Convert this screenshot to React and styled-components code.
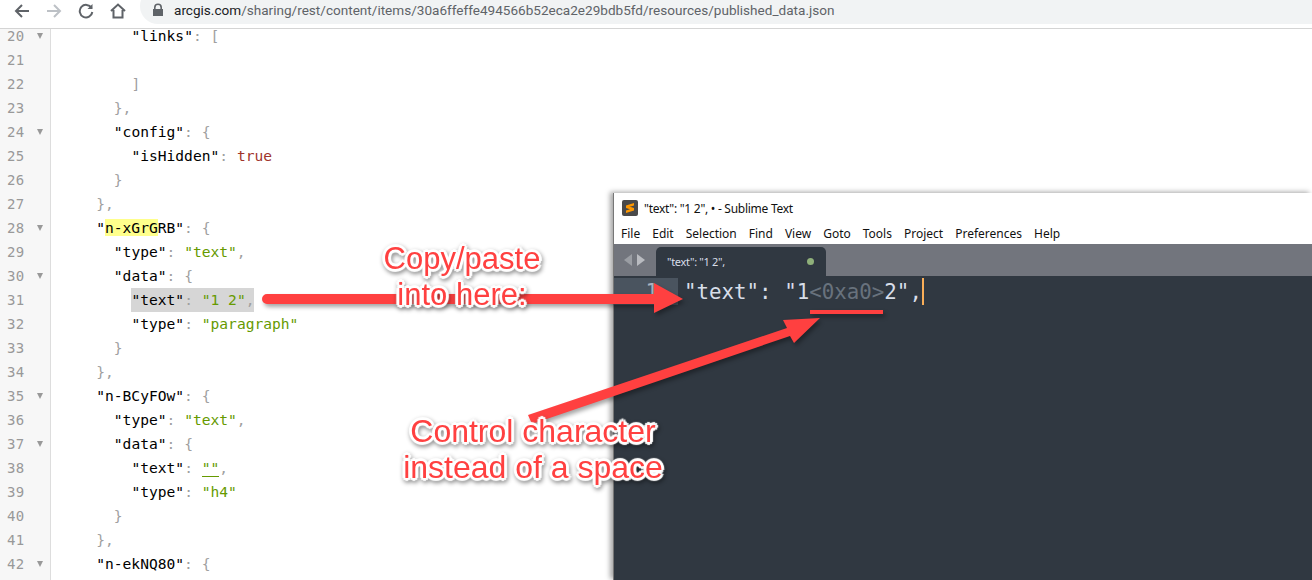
import styled, { createGlobalStyle } from "styled-components";

const GlobalStyle = createGlobalStyle`
  html, body { margin: 0; padding: 0; background: #fff; }
  body { width: 1312px; height: 580px; overflow: hidden; position: relative; }
`;

const Page = styled.div`
  position: relative;
  width: 1312px;
  height: 580px;
  overflow: hidden;
  display: flex;
  flex-direction: column;
`;

/* browser chrome */
const Toolbar = styled.div`
  height: 29px;
  flex: none;
  display: flex;
  align-items: flex-start;
  padding-top: 3px;
  background: #fff;
  border-bottom: 1px solid #d4d4d4;
  box-sizing: border-box;
  position: relative;
  z-index: 1;
  overflow: hidden;
`;
const NavIcon = styled.svg`
  width: 16px;
  height: 16px;
  flex: none;
  margin-left: ${(p) => p.$gap}px;
  fill: none;
  stroke: ${(p) => p.$color || "#5f6368"};
  stroke-width: 2;
`;
const UrlPill = styled.div`
  margin-left: 14px;
  flex: 1;
  height: 36px;
  margin-top: -15px;
  background: #f1f3f4;
  border-radius: 18px 0 0 18px;
  display: flex;
  align-items: center;
  padding: 8px 0 0 12px;
  box-sizing: border-box;
  font: 13.57px "Roboto", sans-serif;
  color: #5f6368;
`;
const Lock = styled.svg`
  width: 12px;
  height: 14px;
  margin-right: 10px;
  fill: #5f6368;
`;
const Host = styled.span`
  color: #202124;
`;

/* json viewer */
const Viewer = styled.div`
  flex: 1;
  margin-top: -5px;
  font: 14.6px "DejaVu Sans Mono", monospace;
  color: #000;
  background: linear-gradient(to right, #f7f7f7 50px, #ddd 50px, #ddd 51px, #fff 51px);
`;
const Row = styled.div`
  display: flex;
  height: 24px;
  line-height: 24px;
`;
const Gutter = styled.div`
  width: 51px;
  flex: none;
  display: flex;
  align-items: center;
  color: #999;
  padding-left: 7px;
  box-sizing: border-box;
`;
const LineNo = styled.span`
  width: 30px;
  font-size: 14px;
  letter-spacing: 0.2px;
`;
const Fold = styled.span`
  width: 0;
  height: 0;
  border-left: 3.5px solid transparent;
  border-right: 3.5px solid transparent;
  border-top: 6px solid #999;
`;
const Code = styled.div`
  padding-left: ${(p) => 10 + p.$indent * 8.8}px;
  white-space: pre;
`;
const Punct = styled.span`
  color: #a0a0a0;
`;
const Str = styled.span`
  color: #669a00;
`;
const Bool = styled.span`
  color: #a0342c;
`;
const Match = styled.span`
  background: #ffff8c;
`;
const Selected = styled.span`
  background: #d6d6d6;
  display: inline-block;
`;
const Empty = styled.span`
  color: #669a00;
  border-bottom: 1px solid #669a00;
`;

/* sublime window */
const Sublime = styled.div`
  position: absolute;
  left: 613px;
  top: 193px;
  right: 0;
  bottom: 0;
  background: #fff;
  box-shadow: -3px -1px 5px rgba(0, 0, 0, 0.35);
  border-left: 1px solid #777;
  display: flex;
  flex-direction: column;
  font: 12px "Noto Sans", sans-serif;
  color: #111;
`;
const TitleBar = styled.div`
  height: 30px;
  display: flex;
  align-items: center;
  gap: 6px;
  padding-left: 8px;
  letter-spacing: -0.27px;
`;
const Menu = styled.div`
  height: 21px;
  display: flex;
  align-items: center;
  gap: 12px;
  padding-left: 7px;
`;
const TabBar = styled.div`
  height: 32px;
  background: #72757d;
  display: flex;
  align-items: flex-end;
  padding-left: 10px;
`;
const TabArrow = styled.span`
  width: 0;
  height: 0;
  align-self: center;
  border-top: 6px solid transparent;
  border-bottom: 6px solid transparent;
  ${(p) => (p.$left ? "border-right: 8px solid #9a9da3;" : "border-left: 8px solid #b9bbc0;")}
  margin-right: ${(p) => (p.$left ? 5 : 0)}px;
`;
const Tab = styled.div`
  margin-left: 11px;
  width: 170px;
  height: 29px;
  background: #303841;
  border-radius: 5px 5px 0 0;
  color: #d8dee9;
  font-size: 11px;
  letter-spacing: -0.3px;
  display: flex;
  align-items: center;
  justify-content: space-between;
  padding: 0 12px 0 11px;
  box-sizing: border-box;
`;
const Dot = styled.span`
  width: 7px;
  height: 7px;
  border-radius: 50%;
  background: #8fb07a;
`;
const EditorPane = styled.div`
  flex: 1;
  background: #303841;
  padding-top: 2px;
`;
const EditorLine = styled.div`
  display: flex;
  height: 27px;
  font: 20.8px/29px "DejaVu Sans Mono", monospace;
  color: #d8dee9;
`;
const EditorGutter = styled.div`
  width: 64px;
  background: #4a545f;
  text-align: right;
  padding-right: 20px;
  box-sizing: border-box;
  color: #aab2bf;
`;
const EditorText = styled.div`
  padding-left: 6px;
  white-space: pre;
`;
const Ctrl = styled.span`
  color: #68727d;
`;
const Caret = styled.span`
  display: inline-block;
  width: 2px;
  height: 27px;
  background: #f9ae58;
  vertical-align: top;
`;

/* annotations */
const Overlay = styled.svg`
  position: absolute;
  left: 0;
  top: 0;
  width: 1312px;
  height: 580px;
  filter: drop-shadow(2px 3px 2px rgba(0, 0, 0, 0.35));
`;
const Callout = styled.div`
  position: absolute;
  left: ${(p) => p.$x}px;
  top: ${(p) => p.$y}px;
  transform: translateX(-50%);
  text-align: center;
  white-space: nowrap;
  font: ${(p) => p.$size}px/36px "Liberation Sans", Arial, sans-serif;
  color: #ff4040;
  text-shadow: 3px 0 1px #fff, -3px 0 1px #fff, 0 3px 1px #fff, 0 -3px 1px #fff, 2px 2px 1px #fff,
    -2px 2px 1px #fff, 2px -2px 1px #fff, -2px -2px 1px #fff, 0 0 2px #fff;
  filter: drop-shadow(1px 2px 2px rgba(0, 0, 0, 0.45));
`;

const Q = ({ children }) => <>"{children}"</>;
const Key = ({ name, tail = ":" }) => (
  <>
    <Q>{name}</Q>
    <Punct>{tail}</Punct>
  </>
);
const TypeText = () => (
  <>
    <Key name="type" /> <Str>"text"</Str>
    <Punct>,</Punct>
  </>
);
const Open = ({ name }) => (
  <>
    <Key name={name} /> <Punct>{"{"}</Punct>
  </>
);

const lines = [
  { n: 20, i: 8, fold: true, c: <><Key name="links" /> <Punct>[</Punct></> },
  { n: 21, i: 0 },
  { n: 22, i: 8, c: <Punct>]</Punct> },
  { n: 23, i: 6, c: <Punct>{"},"}</Punct> },
  { n: 24, i: 6, fold: true, c: <Open name="config" /> },
  { n: 25, i: 8, c: <><Key name="isHidden" /> <Bool>true</Bool></> },
  { n: 26, i: 6, c: <Punct>{"}"}</Punct> },
  { n: 27, i: 4, c: <Punct>{"},"}</Punct> },
  { n: 28, i: 4, fold: true, c: <>"<Match>n-xGrG</Match>RB"<Punct>:</Punct> <Punct>{"{"}</Punct></> },
  { n: 29, i: 6, c: <TypeText /> },
  { n: 30, i: 6, fold: true, c: <Open name="data" /> },
  { n: 31, i: 8, c: <Selected><Key name="text" /> <Str>"1 2"</Str><Punct>,</Punct></Selected> },
  { n: 32, i: 8, c: <><Key name="type" /> <Str>"paragraph"</Str></> },
  { n: 33, i: 6, c: <Punct>{"}"}</Punct> },
  { n: 34, i: 4, c: <Punct>{"},"}</Punct> },
  { n: 35, i: 4, fold: true, c: <Open name="n-BCyFOw" /> },
  { n: 36, i: 6, c: <TypeText /> },
  { n: 37, i: 6, fold: true, c: <Open name="data" /> },
  { n: 38, i: 8, c: <><Key name="text" /> <Empty>""</Empty><Punct>,</Punct></> },
  { n: 39, i: 8, c: <><Key name="type" /> <Str>"h4"</Str></> },
  { n: 40, i: 6, c: <Punct>{"}"}</Punct> },
  { n: 41, i: 4, c: <Punct>{"},"}</Punct> },
  { n: 42, i: 4, fold: true, c: <Open name="n-ekNQ80" /> },
];

const menuItems = ["File", "Edit", "Selection", "Find", "View", "Goto", "Tools", "Project", "Preferences", "Help"];

export default function App() {
  return (
    <Page>
      <GlobalStyle />
      <Toolbar>
        <NavIcon $gap={14} viewBox="0 0 16 16">
          <path d="M15 8H2M8 2L2 8l6 6" />
        </NavIcon>
        <NavIcon $gap={16} $color="#bdc1c6" viewBox="0 0 16 16">
          <path d="M1 8h13M8 2l6 6-6 6" />
        </NavIcon>
        <NavIcon $gap={16} viewBox="0 0 16 16">
          <path d="M13.5 5A6.3 6.3 0 1 0 14.3 9" />
          <path d="M14.5 1v5h-5" fill="#5f6368" stroke="none" />
        </NavIcon>
        <NavIcon $gap={16} viewBox="0 0 16 16">
          <path d="M1 8l7-6.5L15 8M3.5 7v7.5h9V7" />
        </NavIcon>
        <UrlPill>
          <Lock viewBox="0 0 12 14">
            <path d="M2 6V4.5a4 4 0 0 1 8 0V6h1v7H1V6zm1.6 0h4.8V4.5a2.4 2.4 0 0 0-4.8 0z" />
          </Lock>
          <Host>arcgis.com</Host>/sharing/rest/content/items/30a6ffeffe494566b52eca2e29bdb5fd/resources/published_data.json
        </UrlPill>
      </Toolbar>

      <Viewer>
        {lines.map((l) => (
          <Row key={l.n}>
            <Gutter>
              <LineNo>{l.n}</LineNo>
              {l.fold && <Fold />}
            </Gutter>
            <Code $indent={l.i}>{l.c}</Code>
          </Row>
        ))}
      </Viewer>

      <Sublime>
        <TitleBar>
          <svg width="16" height="16" viewBox="0 0 16 16">
            <rect width="16" height="16" rx="2" fill="#4a4a4a" />
            <path d="M4 5.4L12 3v2.6L4 8zM4 8l8 2.4L4 13v-2.5l4-1.2L4 8zM4 5.6L12 8v2.4L4 8z" fill="#ff9800" />
          </svg>
          <span>"text": "1 2", • - Sublime Text</span>
        </TitleBar>
        <Menu>
          {menuItems.map((m) => (
            <span key={m}>{m}</span>
          ))}
        </Menu>
        <TabBar>
          <TabArrow $left />
          <TabArrow />
          <Tab>
            <span>"text": "1 2",</span>
            <Dot />
          </Tab>
        </TabBar>
        <EditorPane>
          <EditorLine>
            <EditorGutter>1</EditorGutter>
            <EditorText>
              "text": "1<Ctrl>&lt;0xa0&gt;</Ctrl>2",<Caret />
            </EditorText>
          </EditorLine>
        </EditorPane>
      </Sublime>

      <Overlay viewBox="0 0 1312 580">
        <path d="M267 294H654V283L683 299L654 313V304H267a5 5 0 0 1 0-10z" fill="#ff4040" />
        <rect x="810" y="310" width="73" height="4" fill="#ff4040" />
        <path d="M528 415L787 328L783 320L820 318L794 343L790 336L532 424z" fill="#ff4040" />
      </Overlay>
      <Callout $x={462} $y={241} $size={31}>
        Copy/paste
        <br />
        into here:
      </Callout>
      <Callout $x={533} $y={413} $size={32}>
        Control character
        <br />
        instead of a space
      </Callout>
    </Page>
  );
}
